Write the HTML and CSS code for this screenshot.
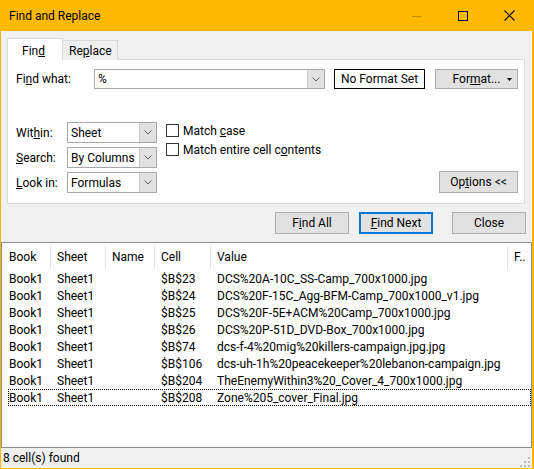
FILE: index.html
```html
<!DOCTYPE html>
<html lang="en">
<head>
<meta charset="utf-8">
<title>Find and Replace</title>
<link rel="stylesheet" href="styles.css">
</head>
<body>
<div class="window">
	<div class="titlebar">
		<span class="title">Find and Replace</span>
		<div class="caption">
			<span class="cap cap-min">
				<svg width="10" height="10" viewBox="0 0 10 10"><path d="M0 5.5H10" stroke="#c48e00" stroke-width="1"/></svg>
			</span>
			<span class="cap">
				<svg width="10" height="10" viewBox="0 0 10 10"><rect x="0.5" y="0.5" width="9" height="9" fill="none" stroke="#000" stroke-width="1"/></svg>
			</span>
			<span class="cap">
				<svg width="11" height="11" viewBox="0 0 11 11"><path d="M0.5 0.5L10.5 10.5M10.5 0.5L0.5 10.5" stroke="#000" stroke-width="1.1"/></svg>
			</span>
		</div>
	</div>

	<div class="dialog">
		<div class="tabs">
			<div class="tab tab-active"><span>Fin<u>d</u></span></div>
			<div class="tab tab-idle"><span>Re<u>p</u>lace</span></div>
		</div>
		<div class="panel">
			<div class="find-row">
				<span class="label label-find">Fi<u>n</u>d what:</span>
				<div class="combo combo-find">
					<span class="combo-text">%</span>
					<span class="combo-btn"><svg width="8" height="5" viewBox="0 0 8 5"><path d="M0.5 0.5L4 4L7.5 0.5" fill="none" stroke="#606060" stroke-width="1"/></svg></span>
				</div>
				<div class="format-preview">No Format Set</div>
				<div class="btn btn-format">
					<span class="btn-format-text">For<u>m</u>at...</span>
					<svg class="caret" width="5" height="3" viewBox="0 0 5 3"><path d="M0 0H5L2.5 3Z" fill="#000"/></svg>
				</div>
			</div>

			<div class="options">
				<div class="selects">
					<div class="select-row">
						<span class="label label-sel">Wit<u>h</u>in:</span>
						<div class="combo combo-sel">
							<span class="combo-text">Sheet</span>
							<span class="combo-btn"><svg width="8" height="5" viewBox="0 0 8 5"><path d="M0.5 0.5L4 4L7.5 0.5" fill="none" stroke="#606060" stroke-width="1"/></svg></span>
						</div>
					</div>
					<div class="select-row">
						<span class="label label-sel"><u>S</u>earch:</span>
						<div class="combo combo-sel">
							<span class="combo-text">By Columns</span>
							<span class="combo-btn"><svg width="8" height="5" viewBox="0 0 8 5"><path d="M0.5 0.5L4 4L7.5 0.5" fill="none" stroke="#606060" stroke-width="1"/></svg></span>
						</div>
					</div>
					<div class="select-row">
						<span class="label label-sel"><u>L</u>ook in:</span>
						<div class="combo combo-sel">
							<span class="combo-text">Formulas</span>
							<span class="combo-btn"><svg width="8" height="5" viewBox="0 0 8 5"><path d="M0.5 0.5L4 4L7.5 0.5" fill="none" stroke="#606060" stroke-width="1"/></svg></span>
						</div>
					</div>
				</div>
				<div class="checks">
					<div class="check"><span class="box"></span><span>Match <u>c</u>ase</span></div>
					<div class="check"><span class="box"></span><span>Match entire cell c<u>o</u>ntents</span></div>
				</div>
				<div class="btn btn-options"><span>Op<u>t</u>ions &lt;&lt;</span></div>
			</div>
		</div>

		<div class="actions">
			<div class="btn btn-action"><span>F<u>i</u>nd All</span></div>
			<div class="btn btn-action btn-default"><span><u>F</u>ind Next</span></div>
			<div class="btn btn-action">Close</div>
		</div>
	</div>

	<div class="results">
		<div class="res-row res-head">
			<span class="cell">Book</span>
			<span class="cell">Sheet</span>
			<span class="cell">Name</span>
			<span class="cell">Cell</span>
			<span class="cell">Value</span>
			<span class="cell">F..</span>
		</div>
		<div class="res-body">
			<div class="res-row"><span class="cell">Book1</span><span class="cell">Sheet1</span><span class="cell"></span><span class="cell">$B$23</span><span class="cell">DCS%20A-10C_SS-Camp_700x1000.jpg</span><span class="cell"></span></div>
			<div class="res-row"><span class="cell">Book1</span><span class="cell">Sheet1</span><span class="cell"></span><span class="cell">$B$24</span><span class="cell">DCS%20F-15C_Agg-BFM-Camp_700x1000_v1.jpg</span><span class="cell"></span></div>
			<div class="res-row"><span class="cell">Book1</span><span class="cell">Sheet1</span><span class="cell"></span><span class="cell">$B$25</span><span class="cell">DCS%20F-5E+ACM%20Camp_700x1000.jpg</span><span class="cell"></span></div>
			<div class="res-row"><span class="cell">Book1</span><span class="cell">Sheet1</span><span class="cell"></span><span class="cell">$B$26</span><span class="cell">DCS%20P-51D_DVD-Box_700x1000.jpg</span><span class="cell"></span></div>
			<div class="res-row"><span class="cell">Book1</span><span class="cell">Sheet1</span><span class="cell"></span><span class="cell">$B$74</span><span class="cell">dcs-f-4%20mig%20killers-campaign.jpg.jpg</span><span class="cell"></span></div>
			<div class="res-row"><span class="cell">Book1</span><span class="cell">Sheet1</span><span class="cell"></span><span class="cell">$B$106</span><span class="cell">dcs-uh-1h%20peacekeeper%20lebanon-campaign.jpg</span><span class="cell"></span></div>
			<div class="res-row"><span class="cell">Book1</span><span class="cell">Sheet1</span><span class="cell"></span><span class="cell">$B$204</span><span class="cell">TheEnemyWithin3%20_Cover_4_700x1000.jpg</span><span class="cell"></span></div>
			<div class="res-row res-focus"><span class="cell">Book1</span><span class="cell">Sheet1</span><span class="cell"></span><span class="cell">$B$208</span><span class="cell">Zone%205_cover_Final.jpg</span><span class="cell"></span></div>
		</div>
	</div>

	<div class="status">
		<span class="status-text">8 cell(s) found</span>
		<svg class="grip" width="10" height="10" viewBox="0 0 10 10">
			<rect x="8" y="0" width="2" height="2" fill="#bcbcbc"/>
			<rect x="4" y="4" width="2" height="2" fill="#bcbcbc"/>
			<rect x="8" y="4" width="2" height="2" fill="#bcbcbc"/>
			<rect x="0" y="8" width="2" height="2" fill="#bcbcbc"/>
			<rect x="4" y="8" width="2" height="2" fill="#bcbcbc"/>
			<rect x="8" y="8" width="2" height="2" fill="#bcbcbc"/>
		</svg>
	</div>
</div>
</body>
</html>
```

FILE: styles.css
```css
:root {
	--accent: #ffb900;
	--face: #f0f0f0;
	--btn-face: #e1e1e1;
	--btn-edge: #adadad;
	--pane-edge: #d9d9d9;
}

* {
	box-sizing: border-box;
}

body {
	margin: 0;
	font-family: Roboto, "Liberation Sans", sans-serif;
	font-size: 12px;
	color: #000;
}

u {
	text-underline-offset: 1px;
}

.window {
	width: 534px;
	height: 469px;
	display: flex;
	flex-direction: column;
	background: var(--face);
	border: 1px solid var(--accent);
	border-top: 0;
	border-right-width: 2px;
}

/* title bar */

.titlebar {
	flex: none;
	height: 31px;
	display: flex;
	align-items: center;
	padding-left: 8px;
	background: var(--accent);
}

.title {
	flex: 1;
}

.caption {
	display: flex;
	align-self: stretch;
}

.cap {
	width: 46px;
	display: flex;
	align-items: center;
	justify-content: center;
}

.cap svg {
	display: block;
}

/* dialog body */

.dialog {
	flex: none;
	padding: 7px 6px 8px 6px;
}

.tabs {
	display: flex;
	align-items: flex-end;
	height: 22px;
	margin-bottom: -1px;
}

.tab {
	display: flex;
	align-items: center;
	width: 56px;
	border: 1px solid var(--pane-edge);
	border-bottom: 0;
}

.tab-active {
	position: relative;
	z-index: 1;
	height: 22px;
	padding: 3px 0 0 14px;
	background: #fff;
}

.tab-idle {
	height: 20px;
	margin-left: -1px;
	padding-left: 6px;
	background: var(--face);
}

.panel {
	width: 518px;
	height: 145px;
	padding: 9px 6px 0 8px;
	background: #fff;
	border: 1px solid var(--pane-edge);
}

.find-row {
	display: flex;
	align-items: center;
	height: 20px;
}

.label {
	flex: none;
	white-space: nowrap;
}

.label-find {
	width: 78px;
}

.label-sel {
	width: 51px;
}

.combo {
	display: flex;
	height: 100%;
	border: 1px solid #a8a8a8;
	background: #fff;
}

.combo-find {
	width: 231px;
}

.combo-sel {
	width: 90px;
	height: 21px;
}

.combo-text {
	flex: 1;
	display: flex;
	align-items: center;
	padding-left: 3px;
	white-space: nowrap;
}

.combo-btn {
	width: 17px;
	display: flex;
	align-items: center;
	justify-content: center;
	background: var(--btn-face);
	border-left: 1px solid #c4c4c4;
}

.format-preview {
	width: 91px;
	height: 20px;
	margin-left: 9px;
	display: flex;
	align-items: center;
	justify-content: center;
	border: 1px solid #000;
}

.btn {
	display: flex;
	align-items: center;
	justify-content: center;
	background: var(--btn-face);
	border: 1px solid var(--btn-edge);
	white-space: nowrap;
}

.btn-format {
	width: 83px;
	height: 20px;
	margin-left: 10px;
	display: grid;
	grid-template-columns: 1fr auto 1fr;
}

.btn-format-text {
	grid-column: 2;
}

.caret {
	grid-column: 3;
	justify-self: end;
	margin-right: 5px;
}

.options {
	display: flex;
	margin-top: 33px;
}

.selects {
	display: flex;
	flex-direction: column;
	gap: 4px;
}

.select-row {
	display: flex;
	align-items: center;
}

.checks {
	display: flex;
	flex-direction: column;
	gap: 6px;
	margin-left: 9px;
	padding-top: 2px;
}

.check {
	display: flex;
	align-items: center;
	height: 13px;
	white-space: nowrap;
}

.box {
	width: 13px;
	height: 13px;
	margin-right: 4px;
	border: 1px solid #333;
	background: #fff;
}

.btn-options {
	align-self: flex-end;
	width: 79px;
	height: 22px;
	margin-left: auto;
}

.actions {
	display: flex;
	justify-content: flex-end;
	margin-top: 8px;
}

.btn-action {
	width: 74px;
	height: 22px;
}

.btn-default {
	margin: 0 19px 0 10px;
	border: 2px solid #0078d7;
}

/* results list */

.results {
	flex: none;
	height: 206px;
	background: #fff;
	border: 1px solid #8e8e8e;
}

.res-row {
	display: grid;
	grid-template-columns: 49px 55px 49px 56px 297px 1fr;
	height: 17px;
	align-items: center;
	white-space: nowrap;
}

.res-row .cell {
	padding-left: 6px;
	overflow: hidden;
}

.res-row .cell:first-child {
	padding-left: 7px;
}

.res-head {
	height: 27px;
	padding-top: 1px;
}

.res-head .cell {
	height: 100%;
	display: flex;
	align-items: center;
	background: linear-gradient(#e5e5e5, #e5e5e5) right center / 1px 23px no-repeat;
}

.res-head .cell:last-child {
	background: none;
}

.res-focus {
	position: relative;
}

.res-focus::after {
	content: "";
	position: absolute;
	top: 0;
	right: 0;
	bottom: 0;
	left: 6px;
	border: 1px dotted #000;
}

/* status bar */

.status {
	flex: 1;
	display: flex;
	align-items: center;
	padding-left: 2px;
	background: var(--face);
}

.status-text {
	flex: 1;
}

.grip {
	align-self: flex-end;
	margin: 0 2px 1px 0;
}
```
